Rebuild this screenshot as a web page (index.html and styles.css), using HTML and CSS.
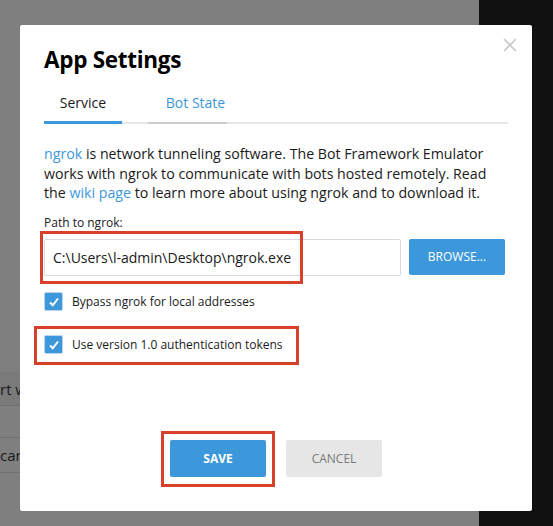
FILE: index.html
```html
<!DOCTYPE html>
<html>
<head>
<meta charset="utf-8">
<link rel="stylesheet" href="styles.css">
</head>
<body>
<div class="app">
  <div class="main">
    <div class="bg-row row-a"><span class="bg-text">rt with</span></div>
    <div class="bg-row row-b"><span class="bg-text">car</span></div>
  </div>
  <div class="side"></div>

  <div class="dialog">
    <button class="close" aria-label="Close">
      <svg width="14" height="14" viewBox="0 0 14 14"><path d="M1 1L13 13M13 1L1 13" stroke="#c8c8c8" stroke-width="1.6" fill="none"/></svg>
    </button>
    <h1 class="title">App Settings</h1>
    <div class="tabs">
      <div class="tab active">Service</div>
      <div class="tab">Bot State</div>
    </div>
    <p class="intro"><a class="link">ngrok</a> is network tunneling software. The Bot Framework Emulator works with ngrok to communicate with bots hosted remotely. Read the <a class="link">wiki page</a> to learn more about using ngrok and to download it.</p>
    <label class="field-label">Path to ngrok:</label>
    <div class="path-row">
      <div class="input">C:\Users\l-admin\Desktop\ngrok.exe</div>
      <button class="btn btn-primary browse">BROWSE...</button>
      <div class="highlight hl-input"></div>
    </div>
    <div class="check-row">
      <span class="checkbox"><svg width="12" height="12" viewBox="0 0 12 12"><path d="M2 6.5L4.8 9.3L10 2.5" stroke="#fff" stroke-width="2" fill="none"/></svg></span>
      <span class="check-label">Bypass ngrok for local addresses</span>
    </div>
    <div class="check-row second">
      <span class="checkbox"><svg width="12" height="12" viewBox="0 0 12 12"><path d="M2 6.5L4.8 9.3L10 2.5" stroke="#fff" stroke-width="2" fill="none"/></svg></span>
      <span class="check-label">Use version 1.0 authentication tokens</span>
      <div class="highlight hl-check"></div>
    </div>
    <div class="actions">
      <div class="save-wrap">
        <button class="btn btn-primary save">SAVE</button>
        <div class="highlight hl-save"></div>
      </div>
      <button class="btn btn-secondary cancel">CANCEL</button>
    </div>
  </div>
</div>
</body>
</html>
```

FILE: styles.css
```css
* { box-sizing: border-box; }
html, body { margin: 0; padding: 0; }
body {
  width: 553px;
  height: 526px;
  overflow: hidden;
  font-family: "Open Sans", "Noto Sans", sans-serif;
}
.app {
  position: relative;
  display: flex;
  width: 553px;
  height: 526px;
}
.main {
  width: 479px;
  background: #7f7f7f;
  padding-top: 372px;
}
.side {
  flex: 1;
  background: #111111;
}
.bg-row {
  display: flex;
  align-items: center;
  border-bottom: 1px solid #6f6f6f;
  overflow: hidden;
}
.row-a { background: #7a7a7a; height: 34px; }
.row-b { margin-top: 31px; height: 36px; border-top: 1px solid #6f6f6f; }
.bg-text {
  margin-left: 0;
  font-size: 15px;
  color: #1a1a1a;
  white-space: nowrap;
}
.dialog {
  position: absolute;
  left: 20px;
  top: 25px;
  width: 512px;
  height: 486px;
  background: #fff;
  padding: 20px 24px 0 24px;
  border-radius: 2px;
}
.close {
  position: absolute;
  right: 15px;
  top: 13px;
  padding: 0;
  border: 0;
  background: none;
  width: 14px;
  height: 14px;
}
.close svg { display: block; }
.title {
  margin: 0;
  font-size: 22.5px;
  font-weight: 700;
  color: #000;
  line-height: 30px;
  letter-spacing: -0.3px;
}
.tabs {
  display: flex;
  margin-top: 18px;
  border-bottom: 2px solid #e6e6e6;
}
.tab {
  font-size: 14px;
  line-height: 20px;
  padding: 0 0 8px 0;
  margin-bottom: -2px;
  border-bottom: 3px solid transparent;
  color: #3c97db;
  text-align: center;
}
.tab.active {
  width: 78px;
  color: #1a1a1a;
  border-bottom-color: #3c97db;
}
.tab:not(.active) {
  width: 79px;
  margin-left: 26px;
  padding-left: 16px;
  border-bottom: 2px solid #cccccc;
  padding-bottom: 9px;
}
.intro {
  margin: 20px 0 0 0;
  font-size: 14.2px;
  line-height: 19.5px;
  color: #1a1a1a;
}
.link { color: #3c97db; }
.field-label {
  display: block;
  margin-top: 12px;
  font-size: 12px;
  line-height: 16px;
  color: #1a1a1a;
}
.path-row {
  position: relative;
  display: flex;
  gap: 8px;
  margin-top: 8px;
}
.input {
  width: 357px;
  height: 37px;
  border: 1px solid #d9d9d9;
  border-radius: 2px;
  padding: 0 8px;
  font-size: 14px;
  line-height: 35px;
  color: #1a1a1a;
  white-space: nowrap;
}
.btn {
  border: 0;
  border-radius: 2px;
  font-family: inherit;
  font-size: 12px;
  padding: 0;
}
.btn-primary { background: #3c97db; color: #fff; }
.btn-secondary { background: #e6e6e6; color: #7a7a7a; }
.browse {
  width: 96px;
  height: 36px;
}
.highlight {
  position: absolute;
  border: 3px solid #d9402b;
  pointer-events: none;
}
.hl-input { left: -4px; top: -8px; width: 263px; height: 53px; }
.check-row {
  position: relative;
  display: flex;
  align-items: center;
  gap: 9px;
  margin-top: 16px;
  height: 20px;
}
.check-row.second { margin-top: 23px; }
.checkbox {
  width: 19px;
  height: 19px;
  background: #3c97db;
  border: 1px solid #b8d6ee;
  border-radius: 2px;
  display: flex;
  align-items: center;
  justify-content: center;
}
.check-label {
  font-size: 12px;
  color: #1a1a1a;
}
.hl-check { left: -10px; top: -9px; width: 265px; height: 39px; }
.actions {
  display: flex;
  justify-content: center;
  gap: 20px;
  margin-top: 85px;
}
.save-wrap { position: relative; }
.save, .cancel {
  width: 96px;
  height: 37px;
  font-size: 12px;
}
.save { font-weight: 700; }
.hl-save { left: -9px; top: -9px; width: 114px; height: 56px; }
```
